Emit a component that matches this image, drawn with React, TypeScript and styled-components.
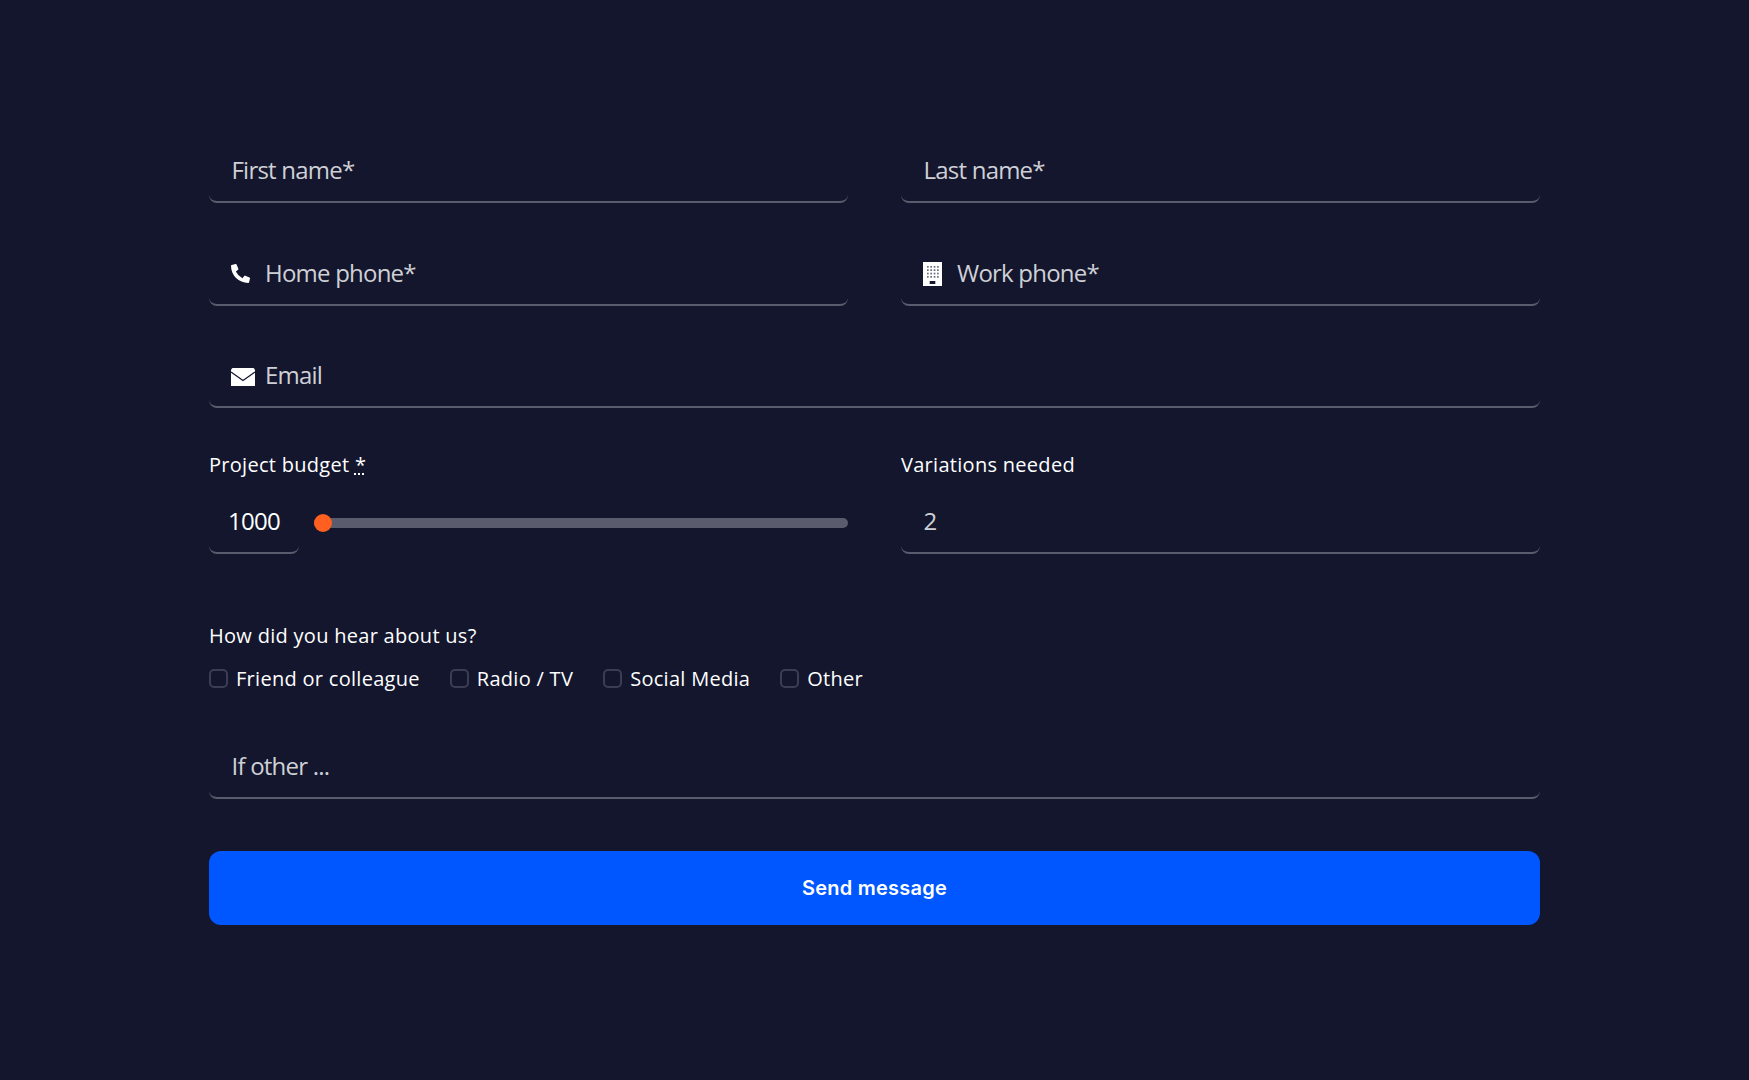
import React from "react";
import styled, { createGlobalStyle } from "styled-components";
import { FaPhoneAlt } from "react-icons/fa";

const Global = createGlobalStyle`
  html, body { margin: 0; padding: 0; background: #13162d; }
  * { box-sizing: border-box; }
`;

const Page = styled.div`
  min-height: 1080px;
  padding: 139px 209px 0;
  background: #13162d;
  font-family: "Open Sans", sans-serif;
  color: #fff;
`;

const Form = styled.form`
  display: flex;
  flex-direction: column;
  width: 1331px;
`;

const TwoCols = styled.div<{ $mb?: number }>`
  display: grid;
  grid-template-columns: 1fr 1fr;
  column-gap: 53px;
  margin-bottom: ${(p) => p.$mb ?? 38}px;
`;

const Field = styled.label<{ $mb?: number }>`
  display: flex;
  align-items: center;
  height: 64px;
  padding: 0 22.5px;
  border-bottom: 2px solid #5a5c6e;
  border-radius: 8px;
  margin-bottom: ${(p) => p.$mb ?? 0}px;
`;

const IconSlot = styled.span<{ $top?: number }>`
  display: flex;
  align-items: center;
  width: 34px;
  margin-left: -0.5px;
  padding-top: ${(p) => p.$top ?? 0}px;
  flex: none;
  color: #fff;
`;

const TextInput = styled.input`
  flex: 1;
  min-width: 0;
  border: 0;
  outline: 0;
  padding: 0;
  margin-bottom: 2px;
  background: transparent;
  color: #cfd0d5;
  font: 400 24px "Open Sans", sans-serif;
  letter-spacing: -0.78px;
  appearance: textfield;
  &::placeholder { color: #cfd0d5; opacity: 1; }
  &::-webkit-inner-spin-button { appearance: none; }
`;

const Column = styled.div`
  display: flex;
  flex-direction: column;
  min-width: 0;
`;

const Caption = styled.div`
  font-size: 20px;
  line-height: 27px;
  letter-spacing: 0.29px;
  margin-bottom: 12px;
  abbr { text-decoration: underline dotted; }
`;

const BudgetRow = styled.div`
  display: flex;
  align-items: center;
  gap: 15px;
`;

const NumberField = styled.input`
  width: 90px;
  height: 64px;
  flex: none;
  padding: 0 0 2px;
  border: 0;
  border-bottom: 2px solid #5a5c6e;
  border-radius: 8px;
  outline: 0;
  background: transparent;
  color: #fff;
  text-align: center;
  font: 400 24px "Open Sans", sans-serif;
  letter-spacing: -0.78px;
  appearance: textfield;
  &::-webkit-inner-spin-button { appearance: none; }
`;

const Range = styled.input`
  flex: 1;
  min-width: 0;
  height: 18px;
  margin: 2px 0 0;
  background: transparent;
  appearance: none;
  &::-webkit-slider-runnable-track {
    height: 10px;
    border-radius: 5px;
    background: #5a5c6e;
  }
  &::-webkit-slider-thumb {
    appearance: none;
    width: 18px;
    height: 18px;
    margin-top: -4px;
    border-radius: 50%;
    background: #ff5f1f;
  }
`;

const Question = styled(Caption)`
  margin: 68px 0 16px;
`;

const Checks = styled.div`
  display: flex;
  align-items: center;
  gap: 30px;
  margin-bottom: 43px;
`;

const CheckLabel = styled.label`
  display: flex;
  align-items: center;
  gap: 8px;
  font-size: 20px;
  line-height: 27px;
  letter-spacing: 0.29px;
`;

const Box = styled.input`
  appearance: none;
  width: 19px;
  height: 19px;
  margin: 0;
  border: 2px solid #3b3e52;
  border-radius: 5px;
  background: transparent;
`;

const Submit = styled.button`
  height: 74px;
  margin-top: 52px;
  border: 0;
  border-radius: 12px;
  background: #0057ff;
  color: #fff;
  font: 600 20px Inter, sans-serif;
  letter-spacing: 0.25px;
`;

const Building = () => (
  <svg width="19" height="24" viewBox="0 0 19 24" aria-hidden="true">
    <rect width="19" height="24" fill="#fff" />
    {[4, 7.3, 10.7, 14].map((y) =>
      [4, 7.3, 10.7, 14].map((x) => <rect key={`${x}-${y}`} x={x} y={y} width="1.7" height="1.7" fill="#6b6e80" />)
    )}
    <rect x="6.7" y="19" width="5.6" height="3" fill="#13162d" />
  </svg>
);

const Envelope = () => (
  <svg width="24" height="18" viewBox="0 0 24 18" aria-hidden="true">
    <path d="M1.5 0h21L24 1.5V18H0V1.5z" fill="#fff" />
    <path d="M0 4l12 8.5L24 4" fill="none" stroke="#13162d" strokeWidth="1.2" />
  </svg>
);

export default function App() {
  return (
    <Page>
      <Global />
      <Form>
        <TwoCols $mb={39}>
          <Field><TextInput placeholder="First name*" /></Field>
          <Field><TextInput placeholder="Last name*" /></Field>
        </TwoCols>
        <TwoCols>
          <Field><IconSlot><FaPhoneAlt size={19} /></IconSlot><TextInput placeholder="Home phone*" /></Field>
          <Field><IconSlot $top={2}><Building /></IconSlot><TextInput placeholder="Work phone*" /></Field>
        </TwoCols>
        <Field $mb={43}><IconSlot $top={4}><Envelope /></IconSlot><TextInput placeholder="Email" /></Field>
        <TwoCols $mb={0}>
          <Column>
            <Caption>Project budget <abbr>*</abbr></Caption>
            <BudgetRow>
              <NumberField type="number" defaultValue={1000} />
              <Range type="range" min={1000} max={10000} defaultValue={1000} />
            </BudgetRow>
          </Column>
          <Column>
            <Caption>Variations needed</Caption>
            <Field><TextInput type="number" defaultValue={2} /></Field>
          </Column>
        </TwoCols>
        <Question>How did you hear about us?</Question>
        <Checks>
          <CheckLabel><Box type="checkbox" />Friend or colleague</CheckLabel>
          <CheckLabel><Box type="checkbox" />Radio / TV</CheckLabel>
          <CheckLabel><Box type="checkbox" />Social Media</CheckLabel>
          <CheckLabel><Box type="checkbox" />Other</CheckLabel>
        </Checks>
        <Field><TextInput placeholder="If other ..." /></Field>
        <Submit type="button">Send message</Submit>
      </Form>
    </Page>
  );
}
